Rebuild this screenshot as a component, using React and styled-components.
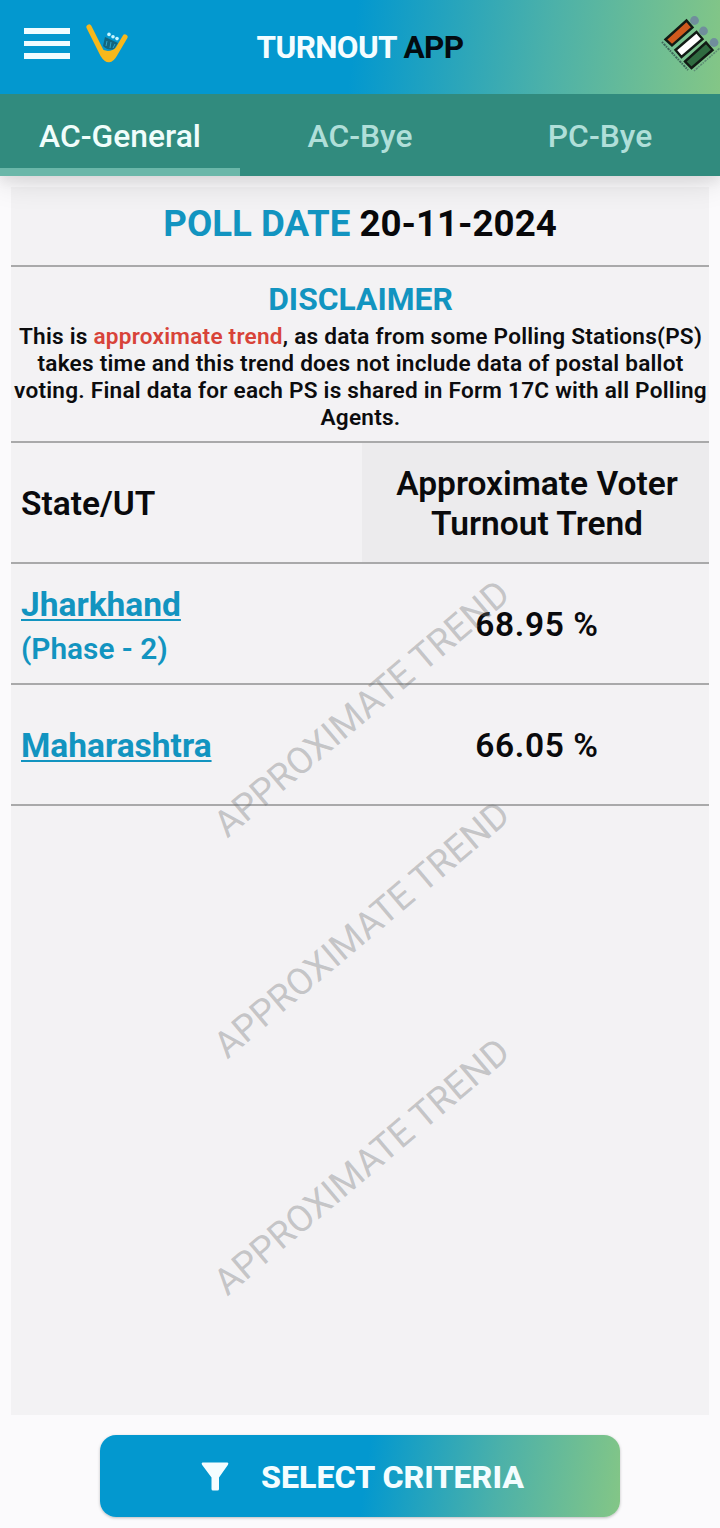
import React from 'react'
import styled, { createGlobalStyle } from 'styled-components'


const GlobalStyle = createGlobalStyle`
    * {
        box-sizing: border-box;
    }

    body {
        margin: 0;
        background: #fbfafc;
        font-family: Roboto, "Liberation Sans", sans-serif;
    }
`
const StyledPage = styled.div`
    width: 720px;
    height: 1528px;
    display: flex;
    flex-direction: column;
    overflow: hidden;
`
const StyledHeader = styled.header`
    height: 94px;
    flex: none;
    display: grid;
    grid-template-columns: 240px 240px 240px;
    align-items: center;
    background: linear-gradient(96deg, #0398cf 0%, #0398cf 49%, #4cb1a9 76%, #84c686 100%);
    z-index: 2;
`
const StyledHeaderLeft = styled.div`
    display: flex;
    align-items: center;
    padding: 0 0 7px 24px;
    gap: 16px;
`
const StyledMenu = styled.button`
    display: flex;
    flex-direction: column;
    gap: 7px;
    padding: 0;
    border: none;
    background: none;
    cursor: pointer;
`
const StyledMenuBar = styled.span`
    width: 46px;
    height: 5.5px;
    background: #f1fcff;
`
const StyledTitle = styled.h1`
    margin: 0;
    padding-top: 2px;
    text-align: center;
    white-space: nowrap;
    font-size: 31.5px;
    font-weight: 700;
    line-height: 38px;
    letter-spacing: -0.6px;
    color: #f4fdff;

    span {
        color: #030b10;
    }
`
const StyledHeaderRight = styled.div`
    display: flex;
    justify-content: flex-end;
    padding-bottom: 6px;
`
const StyledTabs = styled.nav`
    height: 82px;
    flex: none;
    display: flex;
    background: #318b7e;
    box-shadow: 0 6px 30px rgba(0, 0, 0, 0.13), 0 6px 10px rgba(0, 0, 0, 0.05);
    z-index: 1;
`
const StyledTab = styled.button`
    flex: 1;
    padding: 10px 0 0;
    border: none;
    border-bottom: 8px solid ${props => props.$active ? '#6ab7a9' : 'transparent'};
    background: none;
    font-family: inherit;
    font-size: 31.8px;
    font-weight: 500;
    color: ${props => props.$active ? '#f0fdfb' : '#b0dfd9'};
    cursor: pointer;
`
const StyledCard = styled.main`
    position: relative;
    width: 698px;
    height: 1228px;
    flex: none;
    margin: 11px 0 0 11px;
    background: #f3f2f4;
`
const StyledPollDate = styled.div`
    height: 80px;
    padding-top: 15px;
    border-bottom: 2px solid #a9a9aa;
    text-align: center;
    font-size: 36.7px;
    font-weight: 700;
    line-height: 44px;
    color: #08080a;
`
const StyledBlue = styled.span`
    color: #1294c0;
`
const StyledDisclaimer = styled.section`
    height: 176px;
    padding-top: 13px;
    border-bottom: 2px solid #a9a9aa;
    text-align: center;
`
const StyledSubtitle = styled.h2`
    margin: 0 0 0 1px;
    font-size: 31.8px;
    font-weight: 700;
    line-height: 38px;
    color: #1294c0;
`
const StyledNote = styled.p`
    margin: 5px -10px 0;
    padding-left: 1px;
    font-size: 22.6px;
    font-weight: 600;
    line-height: 27px;
    letter-spacing: 0.23px;
    white-space: nowrap;
    color: #0c0c0e;

    span {
        color: #d84339;
    }
`
const StyledRow = styled.div`
    height: 121px;
    display: grid;
    grid-template-columns: 351px 1fr;
    border-bottom: 2px solid #a9a9aa;
`
const StyledCell = styled.div`
    display: flex;
    flex-direction: column;
    justify-content: center;
    align-items: ${props => props.$center ? 'center' : 'flex-start'};
    padding: ${props => props.$center ? '3px 0 0 3px' : '3px 0 0 10px'};
    background: ${props => props.$shaded ? '#ecebed' : 'transparent'};
    text-align: ${props => props.$center ? 'center' : 'left'};
    font-size: 33.5px;
    font-weight: 600;
    line-height: 40px;
    letter-spacing: ${props => props.$spacing || '0'};
    color: #0a0a0c;
`
const StyledLink = styled.a`
    color: #1294c0;
    font-weight: 700;
    text-decoration: underline;
    text-decoration-thickness: 2px;
    text-underline-offset: 3px;
    text-decoration-skip-ink: none;
    cursor: pointer;
`
const StyledPhase = styled.span`
    margin: 4px 0 -3px;
    font-size: 29.8px;
    font-weight: 600;
    color: #1294c0;
`
const StyledWatermark = styled.div`
    position: absolute;
    left: 351px;
    top: ${props => props.$top}px;
    transform: translate(-50%, -50%) rotate(-40.2deg);
    font-size: 36.9px;
    line-height: 40px;
    white-space: nowrap;
    color: rgba(110, 112, 114, 0.36);
    pointer-events: none;
`
const StyledFooter = styled.footer`
    display: flex;
    justify-content: center;
    padding-top: 20px;
`
const StyledButton = styled.button`
    width: 520px;
    height: 82px;
    display: flex;
    align-items: center;
    justify-content: center;
    gap: 32px;
    padding: 2px 0 0 5px;
    border: none;
    border-radius: 16px;
    background: linear-gradient(98deg, #0398cf 0%, #0398cf 51%, #4cb1a9 76%, #84c686 100%);
    box-shadow: 0 1px 3px rgba(0, 0, 0, 0.25);
    font-family: inherit;
    font-size: 32.2px;
    font-weight: 800;
    color: #f4fdff;
    cursor: pointer;
`

const VoterLogo = () => (
    <svg width="44" height="42" viewBox="0 0 44 42">
        <path d="M3 4 L17 32 Q23 42 29 31 L39 14" fill="none" stroke="#f7b81b" strokeWidth="5.2" strokeLinecap="round" strokeLinejoin="round" />
        <path d="M14 25 Q23 32 32 23 L26 35 Q22 39 18 34z" fill="#f7b81b" />
        <path d="M19 14 L32 20 L28 26 Q22 28 17 23z" fill="#12657f" />
        <path d="M21 18 l-1 5 M25 19 l-1 6 M29 21 l-2 4" stroke="#2fa5c9" strokeWidth="1" />
        <g fill="#c9f6ff">
            <circle cx="23" cy="11.4" r="1.8" />
            <circle cx="27" cy="13.8" r="1.8" />
            <circle cx="31" cy="15.6" r="1.8" />
        </g>
    </svg>
)

const CommissionLogo = () => (
    <svg width="60" height="58" viewBox="0 0 60 58">
        <g fill="#708e9c">
            <circle cx="34.5" cy="5.5" r="4.4" />
            <circle cx="43.5" cy="16" r="4.4" />
            <circle cx="54" cy="27.5" r="4.4" />
        </g>
        <g stroke="#111a14" strokeWidth="2.4">
            <path d="M5.5 24.5 L26.5 5.5 L32.5 12.5 L12 30.5z" fill="#cf5a1d" />
            <path d="M15.5 35 L36.5 17 L42.5 24 L21.5 42z" fill="#fff" />
            <path d="M25 46.5 L46 27.5 L52.5 35 L31.5 53z" fill="#2f6b40" />
        </g>
        <path d="M2 27 L28 55" stroke="#3f6a5c" strokeWidth="2" strokeDasharray="1.5 1 2.5 0.8" />
        <path d="M34 56 L60 33" stroke="#5d8d74" strokeWidth="1.6" strokeDasharray="1.5 1 2.5 0.8" />
    </svg>
)

const FunnelIcon = () => (
    <svg width="28" height="30" viewBox="0 0 28 30">
        <path d="M1.5 0.5 H26.5 Q28 1 27 2.8 L18 15.5 V27 Q18 28.5 16.5 28.5 H12 Q10.5 28.5 10.5 27 V15.5 L1 2.8 Q0 1 1.5 0.5z" fill="#f4fdff" />
    </svg>
)

const tabs = ['AC-General', 'AC-Bye', 'PC-Bye']

const states = [
    { name: 'Jharkhand', phase: '(Phase - 2)', turnout: '68.95 %' },
    { name: 'Maharashtra', turnout: '66.05 %' },
]

const App = () => {
    return (
        <>
            <GlobalStyle />
            <StyledPage>
                <StyledHeader>
                    <StyledHeaderLeft>
                        <StyledMenu aria-label="Menu">
                            <StyledMenuBar />
                            <StyledMenuBar />
                            <StyledMenuBar />
                        </StyledMenu>
                        <VoterLogo />
                    </StyledHeaderLeft>
                    <StyledTitle>TURNOUT <span>APP</span></StyledTitle>
                    <StyledHeaderRight>
                        <CommissionLogo />
                    </StyledHeaderRight>
                </StyledHeader>
                <StyledTabs>
                    {tabs.map((tab, i) => (
                        <StyledTab key={tab} $active={i === 0}>{tab}</StyledTab>
                    ))}
                </StyledTabs>
                <StyledCard>
                    <StyledPollDate><StyledBlue>POLL DATE</StyledBlue> 20-11-2024</StyledPollDate>
                    <StyledDisclaimer>
                        <StyledSubtitle>DISCLAIMER</StyledSubtitle>
                        <StyledNote>
                            This is <span>approximate trend</span>, as data from some Polling Stations(PS)<br />
                            takes time and this trend does not include data of postal ballot<br />
                            voting. Final data for each PS is shared in Form 17C with all Polling<br />
                            Agents.
                        </StyledNote>
                    </StyledDisclaimer>
                    <StyledRow>
                        <StyledCell>State/UT</StyledCell>
                        <StyledCell $center $shaded>Approximate Voter<br />Turnout Trend</StyledCell>
                    </StyledRow>
                    {states.map(state => (
                        <StyledRow key={state.name}>
                            <StyledCell>
                                <StyledLink>{state.name}</StyledLink>
                                {state.phase && <StyledPhase>{state.phase}</StyledPhase>}
                            </StyledCell>
                            <StyledCell $center $spacing="0.6px">{state.turnout}</StyledCell>
                        </StyledRow>
                    ))}
                    <StyledWatermark $top={522}>APPROXIMATE TREND</StyledWatermark>
                    <StyledWatermark $top={743}>APPROXIMATE TREND</StyledWatermark>
                    <StyledWatermark $top={980}>APPROXIMATE TREND</StyledWatermark>
                </StyledCard>
                <StyledFooter>
                    <StyledButton>
                        <FunnelIcon />
                        SELECT CRITERIA
                    </StyledButton>
                </StyledFooter>
            </StyledPage>
        </>
    )
}

export default App
